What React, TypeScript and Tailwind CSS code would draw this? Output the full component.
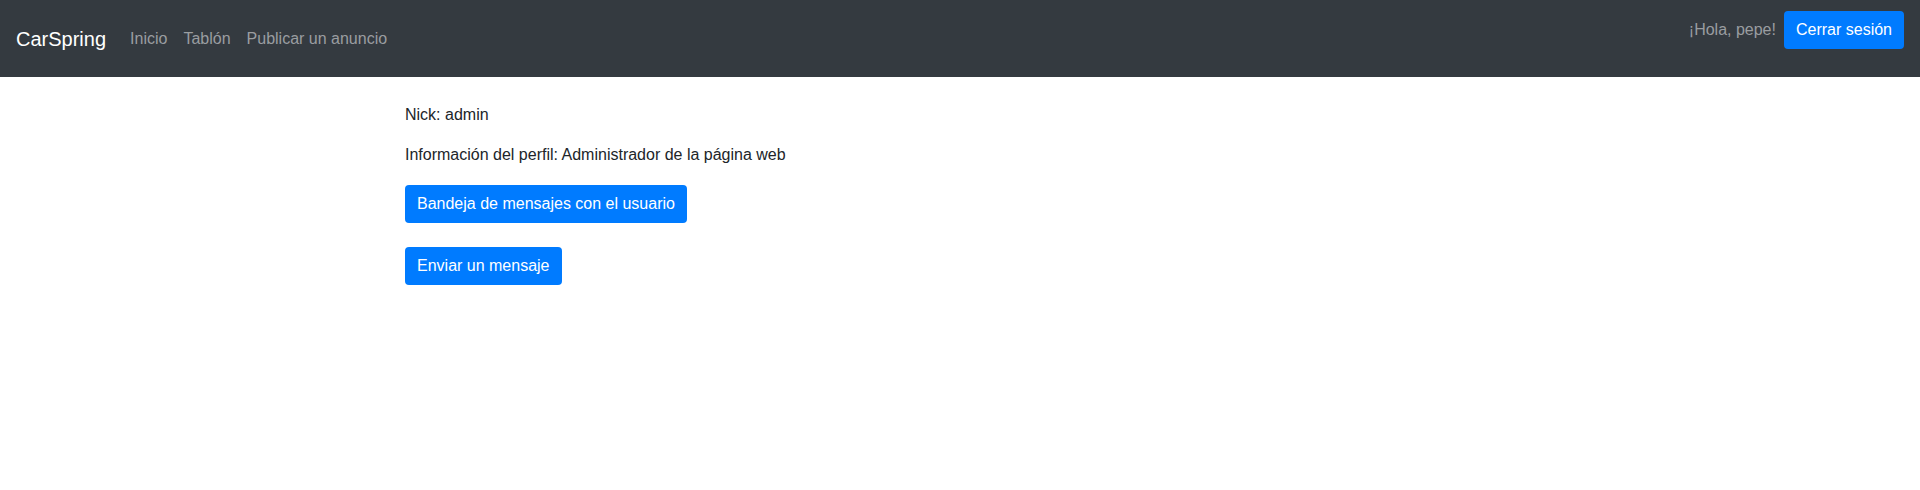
export default function App() {
  return (
    <div className="min-h-[490px] bg-white font-['Liberation_Sans',sans-serif] text-[16px] leading-6 text-[#212529]">
      <nav className="flex h-[77px] items-center justify-between bg-[#343a40] px-4">
        <div className="flex items-center">
          <a className="mr-4 py-[5px] text-[20px] leading-[30px] text-white">CarSpring</a>
          <a className="px-2 py-2 text-[#9a9da0]">Inicio</a>
          <a className="px-2 py-2 text-[#9a9da0]">Tablón</a>
          <a className="px-2 py-2 text-[#9a9da0]">Publicar un anuncio</a>
        </div>
        <div className="mt-[11px] flex items-center gap-2 self-start">
          <span className="text-[#9a9da0]">¡Hola, pepe!</span>
          <button className="rounded bg-[#007bff] px-3 py-[7px] text-white">Cerrar sesión</button>
        </div>
      </nav>

      <main className="mx-auto max-w-[1140px] px-[15px] pt-[26px]">
        <p className="mb-4">Nick: admin</p>
        <p className="mb-[18px]">Información del perfil: Administrador de la página web</p>
        <div className="mb-6">
          <button className="rounded bg-[#007bff] px-3 py-[7px] text-white">
            Bandeja de mensajes con el usuario
          </button>
        </div>
        <div>
          <button className="rounded bg-[#007bff] px-3 py-[7px] text-white">Enviar un mensaje</button>
        </div>
      </main>
    </div>
  );
}
